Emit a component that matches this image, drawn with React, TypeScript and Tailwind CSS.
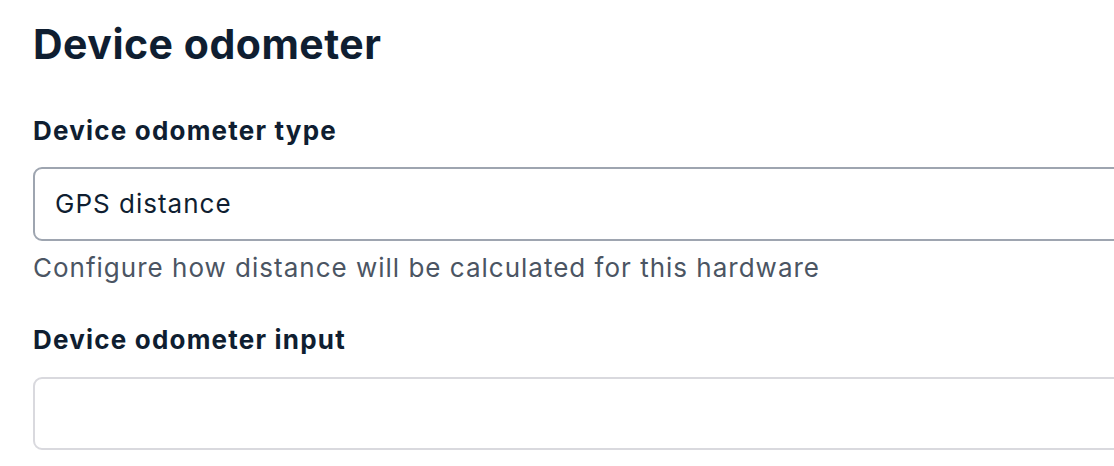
export default function App() {
  return (
    <div className="min-h-[466px] bg-white pl-[33px] pt-[20px] font-['Inter',sans-serif] text-[#0f1e31]">
      <h2 className="text-[41px] font-bold leading-[48px] tracking-[0.5px]">Device odometer</h2>

      <div className="mt-[47px]">
        <label className="block text-[26px] font-bold leading-[32px] tracking-[1.2px]">
          Device odometer type
        </label>
        <div className="mt-[20px] flex h-[74px] w-[1100px] items-center rounded-[9px] border-2 border-[#9ea5b0] px-[20px] text-[26px] leading-[32px] tracking-[1px]">
          GPS distance
        </div>
        <p className="mt-[11px] text-[26px] leading-[32px] tracking-[1px] text-[#4b5563]">
          Configure how distance will be calculated for this hardware
        </p>
      </div>

      <div className="mt-[40px]">
        <label className="block text-[26px] font-bold leading-[32px] tracking-[1.2px]">
          Device odometer input
        </label>
        <div className="mt-[21px] h-[73px] w-[1100px] rounded-[9px] border-2 border-[#d9d9de]" />
      </div>
    </div>
  );
}
